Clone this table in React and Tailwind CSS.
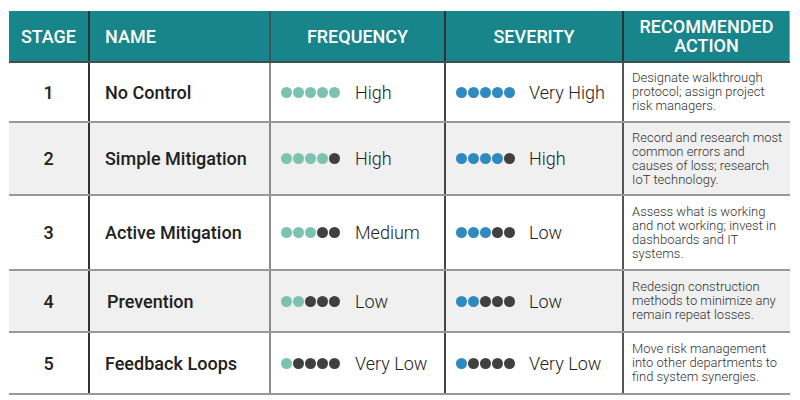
import React from "react";

const rows = [
  {
    stage: "1",
    name: "No Control",
    freq: 5,
    freqLabel: "High",
    sev: 5,
    sevLabel: "Very High",
    action: ["Designate walkthrough", "protocol; assign project", "risk managers."],
    h: "h-[60px]",
    bg: "bg-white",
  },
  {
    stage: "2",
    name: "Simple Mitigation",
    freq: 4,
    freqLabel: "High",
    sev: 4,
    sevLabel: "High",
    action: ["Record and research most", "common errors and", "causes of loss; research", "IoT technology."],
    h: "h-[73px]",
    bg: "bg-[#f0f0f0]",
  },
  {
    stage: "3",
    name: "Active Mitigation",
    freq: 3,
    freqLabel: "Medium",
    sev: 3,
    sevLabel: "Low",
    action: ["Assess what is working", "and not working; invest in", "dashboards and IT", "systems."],
    h: "h-[75px]",
    bg: "bg-white",
  },
  {
    stage: "4",
    name: "Prevention",
    freq: 2,
    freqLabel: "Low",
    sev: 2,
    sevLabel: "Low",
    action: ["Redesign construction", "methods to minimize any", "remain repeat losses."],
    h: "h-[62px]",
    bg: "bg-[#f0f0f0]",
    indent: true,
  },
  {
    stage: "5",
    name: "Feedback Loops",
    freq: 1,
    freqLabel: "Very Low",
    sev: 1,
    sevLabel: "Very Low",
    action: ["Move risk management", "into other departments to", "find system synergies."],
    h: "h-[62px]",
    bg: "bg-white",
  },
];

const cols = "grid grid-cols-[79px_181px_175px_178px_168px]";
const light = "font-['Roboto_Light',Roboto,sans-serif] font-light";
const medium = "font-['Roboto_Medium',Roboto,sans-serif] font-medium";

function Dots({ filled, color }) {
  return (
    <div className="flex gap-px">
      {[0, 1, 2, 3, 4].map((i) => (
        <span
          key={i}
          className={`block w-[11px] h-[11px] rounded-full ${i < filled ? color : "bg-[#404040]"}`}
        />
      ))}
    </div>
  );
}

export default function App() {
  return (
    <div className="w-[800px] h-[400px] bg-white pt-[11px] pl-[9px] font-[Roboto,'Liberation_Sans',sans-serif]">
      <div className="w-[781px]">
        <div className={`${cols} h-[52px] bg-[#18858a] border-b-2 border-[#3f4f50] text-white ${medium} text-[18px]`}>
          <div className="flex items-center justify-center">STAGE</div>
          <div className="flex items-center pl-[15px] border-l-2 border-[#2c3435]">NAME</div>
          <div className="flex items-center justify-center border-l-2 border-[#3b5558]">FREQUENCY</div>
          <div className="flex items-center justify-center border-l-2 border-[#2c3435]">SEVERITY</div>
          <div className="flex items-center justify-center text-center leading-[19px] border-l-2 border-[#2c3435] border-r border-r-[#6fb3b6]">
            RECOMMENDED
            <br />
            ACTION
          </div>
        </div>

        {rows.map((r) => (
          <div key={r.stage} className={`${cols} ${r.h} ${r.bg} border-b-2 border-[#999999]`}>
            <div className={`flex items-center justify-center text-[18px] ${medium} text-[#222]`}>
              {r.stage}
            </div>
            <div
              className={`flex items-center ${r.indent ? "pl-[17px]" : "pl-[15px]"} border-l-2 border-[#333] text-[18px] ${medium} text-[#222]`}
            >
              {r.name}
            </div>
            <div className={`flex items-center pl-[10px] gap-[15px] border-l-2 border-[#8a8a8a] text-[18px] ${light} text-[#222]`}>
              <Dots filled={r.freq} color="bg-[#7cc2b1]" />
              <span>{r.freqLabel}</span>
            </div>
            <div className={`flex items-center pl-[10px] gap-[14px] border-l-2 border-[#444] text-[18px] ${light} text-[#222]`}>
              <Dots filled={r.sev} color="bg-[#2e8ac1]" />
              <span>{r.sevLabel}</span>
            </div>
            <div className={`flex flex-col justify-center pl-[8px] border-l-2 border-[#555] text-[13px] leading-[14px] ${light} text-[#333] whitespace-nowrap`}>
              {r.action.map((line) => (
                <span key={line}>{line}</span>
              ))}
            </div>
          </div>
        ))}
      </div>
    </div>
  );
}
